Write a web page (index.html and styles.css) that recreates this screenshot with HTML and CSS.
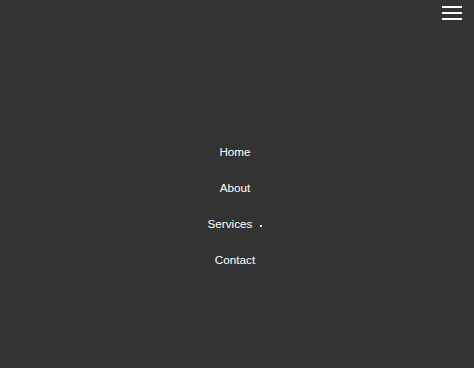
FILE: index.html
```html
<!DOCTYPE html>
<html>
<head>
<meta charset="utf-8">
<link rel="stylesheet" href="styles.css">
</head>
<body>
<div class="page">
  <header class="header">
    <button class="burger" aria-label="Menu">
      <span class="bar"></span>
      <span class="bar"></span>
      <span class="bar"></span>
    </button>
  </header>
  <nav class="menu">
    <ul class="menu-list">
      <li class="menu-item"><a href="#">Home</a></li>
      <li class="menu-item"><a href="#">About</a></li>
      <li class="menu-item"><a href="#">Services</a><span class="caret"></span></li>
      <li class="menu-item"><a href="#">Contact</a></li>
    </ul>
  </nav>
</div>
</body>
</html>
```
FILE: styles.css
```css
html, body {
  margin: 0;
  padding: 0;
  background: #333333;
}
body {
  font-family: "Liberation Sans", Arial, sans-serif;
}
.page {
  height: 368px;
  display: flex;
  flex-direction: column;
}
.header {
  height: 44px;
  display: flex;
  justify-content: flex-end;
  align-items: flex-start;
  padding: 6px 12px 0 0;
  box-sizing: border-box;
}
.burger {
  width: 20px;
  height: 14px;
  padding: 0;
  border: 0;
  background: transparent;
  display: flex;
  flex-direction: column;
  justify-content: space-between;
}
.bar {
  display: block;
  width: 20px;
  height: 2px;
  background: #ffffff;
}
.menu {
  flex: 1;
  display: flex;
  align-items: center;
  justify-content: center;
  padding-right: 4px;
}
.menu-list {
  list-style: none;
  margin: 0;
  padding: 0;
  display: flex;
  flex-direction: column;
  align-items: center;
}
.menu-item {
  height: 36px;
  line-height: 36px;
  font-size: 11.7px;
  display: flex;
  align-items: center;
}
.menu-item a {
  color: #ffffff;
  text-decoration: none;
}
.caret {
  width: 2px;
  height: 2px;
  background: #e6e6e6;
  margin-left: 8px;
  margin-top: 4px;
}
```
